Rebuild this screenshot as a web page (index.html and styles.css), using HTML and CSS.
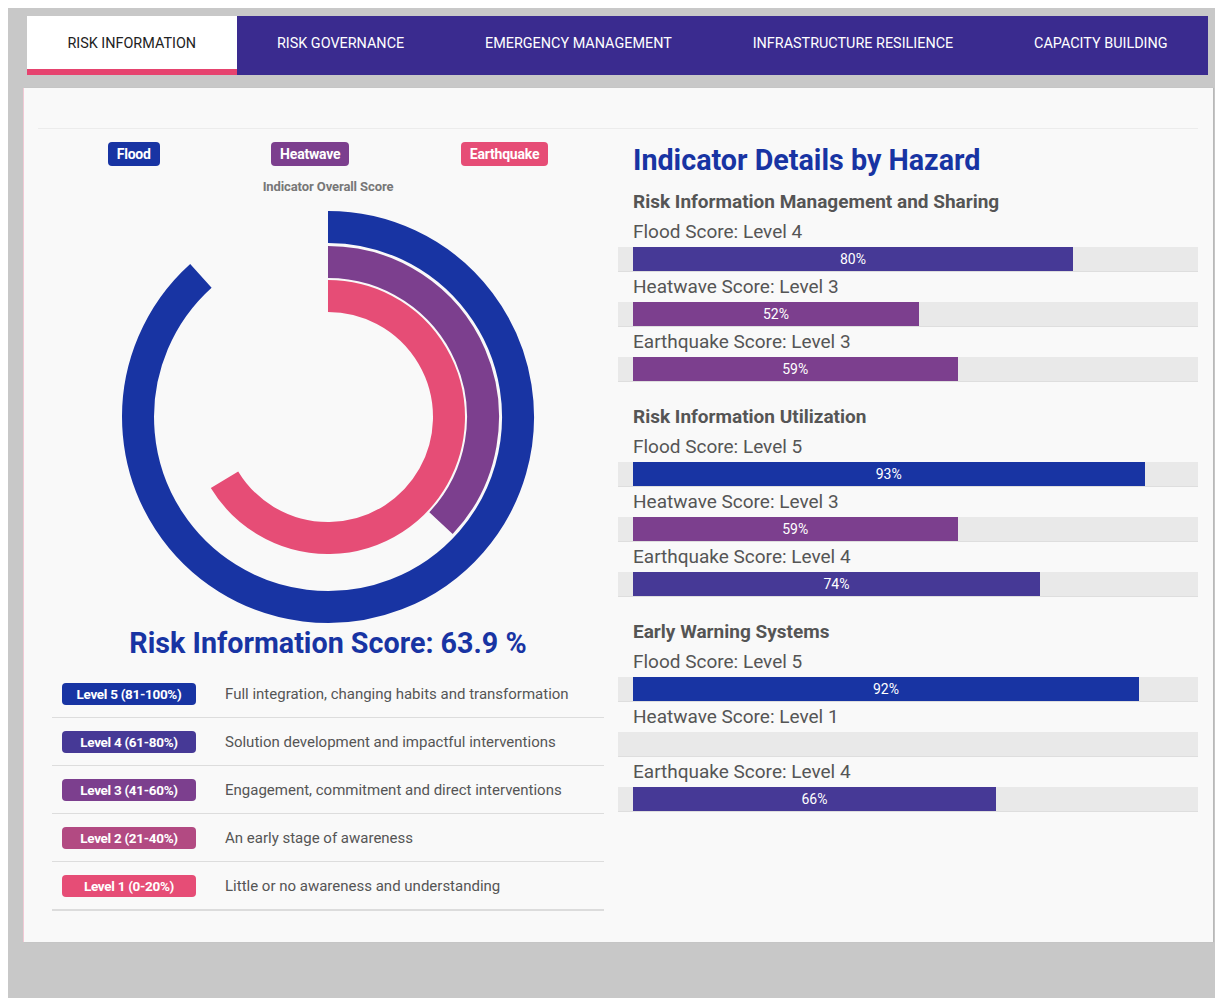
FILE: index.html
```html
<!DOCTYPE html>
<html lang="en">
<head>
<meta charset="utf-8">
<title>Risk Information</title>
<link rel="stylesheet" href="styles.css">
</head>
<body>
<div class="page">
  <nav class="tabs">
    <a class="tab active" href="#">RISK INFORMATION</a>
    <a class="tab" href="#">RISK GOVERNANCE</a>
    <a class="tab" href="#">EMERGENCY MANAGEMENT</a>
    <a class="tab" href="#">INFRASTRUCTURE RESILIENCE</a>
    <a class="tab" href="#">CAPACITY BUILDING</a>
  </nav>

  <section class="panel">
    <div class="row">
      <div class="col col-left">
        <div class="legend">
          <span class="chip lvl5">Flood</span>
          <span class="chip lvl3">Heatwave</span>
          <span class="chip lvl1">Earthquake</span>
        </div>
        <div class="chart-caption">Indicator Overall Score</div>
        <svg class="chart" viewBox="0 0 552 414" width="552" height="414">
          <!-- Flood 88.3% -->
          <path d="M276 17 A190 190 0 1 1 148.9 65.8" fill="none" stroke="#1834a3" stroke-width="32"/>
          <!-- Heatwave 37% -->
          <path d="M276 52 A155 155 0 0 1 389.0 313.1" fill="none" stroke="#7c3f8e" stroke-width="32"/>
          <!-- Earthquake 66.3% -->
          <path d="M276 86 A121 121 0 1 1 172.5 269.7" fill="none" stroke="#e64d76" stroke-width="32"/>
        </svg>
        <h2 class="score">Risk Information Score: 63.9 %</h2>
        <table class="levels">
          <tr><td class="lvl-cell"><span class="lvl-badge lvl5">Level 5 (81-100%)</span></td><td>Full integration, changing habits and transformation</td></tr>
          <tr><td class="lvl-cell"><span class="lvl-badge lvl4">Level 4 (61-80%)</span></td><td>Solution development and impactful interventions</td></tr>
          <tr><td class="lvl-cell"><span class="lvl-badge lvl3">Level 3 (41-60%)</span></td><td>Engagement, commitment and direct interventions</td></tr>
          <tr><td class="lvl-cell"><span class="lvl-badge lvl2">Level 2 (21-40%)</span></td><td>An early stage of awareness</td></tr>
          <tr class="last"><td class="lvl-cell"><span class="lvl-badge lvl1">Level 1 (0-20%)</span></td><td>Little or no awareness and understanding</td></tr>
        </table>
      </div>

      <div class="col col-right">
        <h2 class="details-title">Indicator Details by Hazard</h2>

        <div class="indicator">
          <h3 class="indicator-title">Risk Information Management and Sharing</h3>
          <div class="hazard-label">Flood Score: Level 4</div>
          <div class="track"><div class="fill lvl4" style="width:80%">80%</div></div>
          <div class="hazard-label">Heatwave Score: Level 3</div>
          <div class="track"><div class="fill lvl3" style="width:52%">52%</div></div>
          <div class="hazard-label">Earthquake Score: Level 3</div>
          <div class="track"><div class="fill lvl3" style="width:59%">59%</div></div>
        </div>

        <div class="indicator">
          <h3 class="indicator-title">Risk Information Utilization</h3>
          <div class="hazard-label">Flood Score: Level 5</div>
          <div class="track"><div class="fill lvl5" style="width:93%">93%</div></div>
          <div class="hazard-label">Heatwave Score: Level 3</div>
          <div class="track"><div class="fill lvl3" style="width:59%">59%</div></div>
          <div class="hazard-label">Earthquake Score: Level 4</div>
          <div class="track"><div class="fill lvl4" style="width:74%">74%</div></div>
        </div>

        <div class="indicator">
          <h3 class="indicator-title">Early Warning Systems</h3>
          <div class="hazard-label">Flood Score: Level 5</div>
          <div class="track"><div class="fill lvl5" style="width:92%">92%</div></div>
          <div class="hazard-label">Heatwave Score: Level 1</div>
          <div class="track"><div class="fill lvl1" style="width:0%"></div></div>
          <div class="hazard-label">Earthquake Score: Level 4</div>
          <div class="track"><div class="fill lvl4" style="width:66%">66%</div></div>
        </div>
      </div>
    </div>
  </section>
</div>
</body>
</html>
```

FILE: styles.css
```css
html {
  overflow-x: hidden;
}

body {
  margin: 8px 0 0 8px;
  background: #ffffff;
  font-family: Roboto, "Liberation Sans", Arial, sans-serif;
  color: #555555;
}

.page {
  width: 1220px;
  min-height: 1000px;
  background: #c8c8c8;
  padding-top: 8px;
  box-sizing: border-box;
}

/* ---------- tab bar ---------- */
.tabs {
  display: flex;
  margin: 0 20px 0 19px;
  height: 59px;
  background: #3a2b8f;
}

.tab {
  flex: 1 1 auto;
  display: flex;
  align-items: center;
  justify-content: center;
  padding: 1px 20px 0;
  font-size: 14.4px;
  font-weight: 400;
  color: #ffffff;
  text-decoration: none;
  white-space: nowrap;
  box-sizing: border-box;
  border-bottom: 6px solid transparent;
}

.tab.active {
  background: #ffffff;
  color: #222222;
  border-bottom-color: #e6436f;
}

/* ---------- panel ---------- */
.panel {
  margin: 13px 15px 0 15px;
  padding: 40px 15px 31px;
  background: #f9f9f9;
  box-shadow: inset 1px 0 0 #f1c9d5, 1px 0 1px rgba(0, 0, 0, 0.08);
}

.row {
  display: flex;
  border-top: 1px solid #ececec;
}

.col {
  flex: 0 0 50%;
  box-sizing: border-box;
}

.col-left {
  padding: 0 14px;
}

/* ---------- hazard legend ---------- */
.legend {
  display: flex;
  justify-content: space-around;
  margin-top: 13px;
}

.chip {
  display: inline-block;
  height: 24px;
  line-height: 24px;
  padding: 0 9px;
  border-radius: 4px;
  color: #ffffff;
  font-size: 14px;
  font-weight: 700;
  letter-spacing: -0.2px;
}

.chart-caption {
  margin-top: 13px;
  text-align: center;
  font-size: 13px;
  line-height: 16px;
  font-weight: 700;
  color: #777777;
  letter-spacing: -0.1px;
}

.chart {
  display: block;
  margin-top: 15px;
}

.score {
  margin: 4px 0 0;
  text-align: center;
  font-size: 28.7px;
  line-height: 30px;
  font-weight: 700;
  color: #1834a3;
}

/* ---------- level table ---------- */
.levels {
  width: 100%;
  margin-top: 12px;
  border-collapse: collapse;
  font-size: 15px;
  color: #555555;
}

.levels td {
  height: 47px;
  padding: 0 0 0 10px;
  border-bottom: 1px solid #dddddd;
  vertical-align: middle;
}

.levels tr.last td {
  border-bottom: 2px solid #dcdcdc;
}

.levels .lvl-cell {
  width: 153px;
}

.lvl-badge {
  display: block;
  width: 134px;
  height: 22px;
  line-height: 22px;
  border-radius: 4px;
  text-align: center;
  color: #ffffff;
  font-size: 13.5px;
  font-weight: 700;
  letter-spacing: -0.3px;
}

/* level colours */
.lvl5 { background: #1834a3; }
.lvl4 { background: #463996; }
.lvl3 { background: #7c3f8e; }
.lvl2 { background: #b24a82; }
.lvl1 { background: #e64d76; }

/* ---------- indicator details ---------- */
.details-title {
  margin: 14px 0 10px 15px;
  font-size: 28.7px;
  line-height: 34px;
  font-weight: 700;
  color: #1834a3;
}

.indicator + .indicator {
  margin-top: 20px;
}

.indicator-title {
  margin: 0 0 0 15px;
  font-size: 19px;
  line-height: 30px;
  font-weight: 700;
  color: #555555;
}

.hazard-label {
  padding-left: 15px;
  font-size: 19px;
  line-height: 30px;
  font-weight: 400;
  color: #555555;
}

.track {
  height: 24px;
  padding: 0 15px;
  background: #e9e9e9;
  border-bottom: 1px solid #dedede;
}

.fill {
  height: 24px;
  line-height: 24px;
  text-align: center;
  color: #ffffff;
  font-size: 14px;
  white-space: nowrap;
  overflow: hidden;
}
```
